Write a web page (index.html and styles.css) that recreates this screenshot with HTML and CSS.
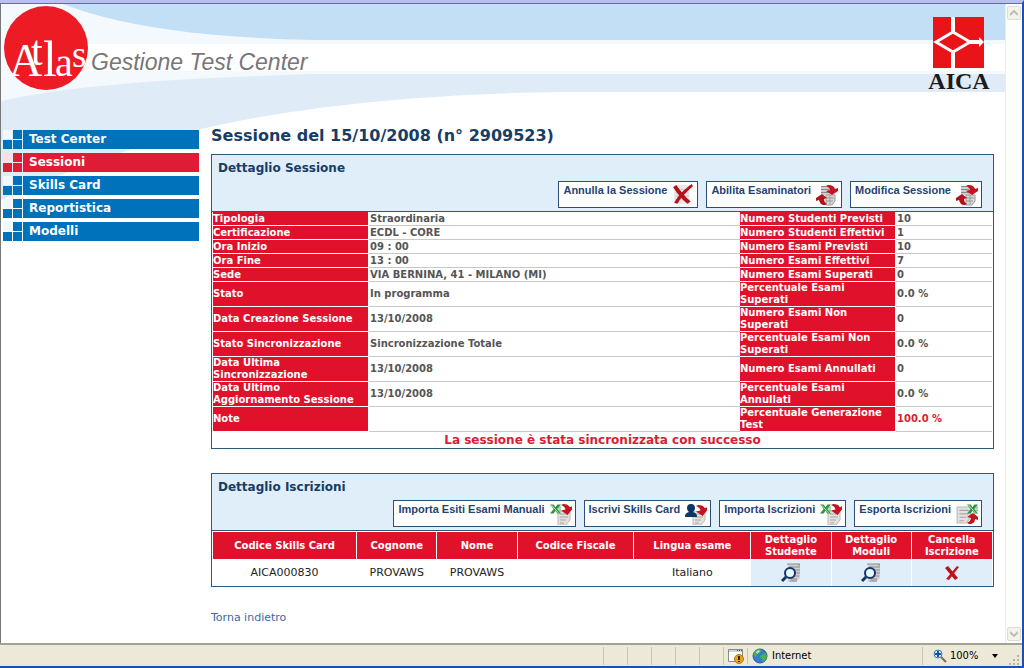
FILE: index.html
```html
<!DOCTYPE html>
<html lang="it">
<head>
<meta charset="utf-8">
<title>Atlas - Gestione Test Center</title>
<link rel="stylesheet" href="styles.css">
</head>
<body>
<svg class="defs" width="0" height="0" aria-hidden="true">
  <defs>
    <symbol id="sheet" viewBox="0 0 14 14">
      <path d="M1 0h12v9l-4 5H1z" fill="#e2e0e0" stroke="#bdbaba"/>
      <path d="M3 3h8M3 6h8M3 9h6M3 12h4" stroke="#aaa7a7" fill="none"/>
    </symbol>
    <symbol id="excel" viewBox="0 0 12 10">
      <path d="M0 0h4l2 3 2-3h4L8 5l4 5H8L6 7 4 10H0l4-5z" fill="#2f9440"/>
      <path d="M1.500 .5l8 9" stroke="#c5e6c6" fill="none"/>
      <path d="M9 3h3M9 5h3M9 7h3" stroke="#57a860" fill="none"/>
    </symbol>
    <symbol id="arrow-down" viewBox="0 0 10 10">
      <path d="M0 1l2-1c3 0 5 1 6 3l2-1v3L6 10 0 6l4-1C4 3 2 2 0 1z" fill="#c4141f"/>
    </symbol>
    <symbol id="ico-cancel" viewBox="0 0 20 20">
      <path d="M2 1h14v17H2z" fill="#e9e6e6"/>
      <path d="M3 5h12M3 8h12M3 11h12M3 14h12" stroke="#cfcaca"/>
      <path d="M1 3l3-2c4 6 8 11 13 15l-3 2C9 14 5 9 1 3z" fill="#b5121b"/>
      <path d="M18 0l1 2C13 7 8 12 5 18l-3-1C6 10 11 5 18 0z" fill="#b5121b"/>
    </symbol>
    <symbol id="ico-update" viewBox="0 0 22 22">
      <path d="M5 2h9v9H5z" fill="#d0cece"/>
      <path d="M5 2.500h7M5 5.500h8M5 8.500h9" stroke="#8a8888"/>
      <path d="M10 11h9v6l-3 4h-6z" fill="#dad8d8" stroke="#999"/>
      <path d="M10 14h8M10 17h7M14 11v9" stroke="#999" fill="none"/>
      <path d="M10 2l2-1c4 0 6 1 7 4l3-1v3l-6 4-6-4 4-1c0-2-2-3-4-4z" fill="#c4141f"/>
      <path d="M11 20l-2 1c-4 0-5-2-6-5l-3 1v-3l6-4 5 4-3 1c0 2 1 4 3 5z" fill="#b5121b"/>
    </symbol>
    <symbol id="ico-import" viewBox="0 0 22 22">
      <use href="#sheet" x="7" y="8" width="14" height="14"/>
      <use href="#excel" x="0" y="1" width="11" height="10"/>
      <use href="#arrow-down" x="11" y="1" width="11" height="11"/>
    </symbol>
    <symbol id="ico-export" viewBox="0 0 22 22">
      <use href="#sheet" x="0" y="3" width="16" height="18"/>
      <use href="#excel" x="11" y="1" width="11" height="10"/>
      <path d="M11 20l2 1c4 0 6-2 6-5l3 1v-3l-5-4-6 4 4 1c0 2-2 4-4 5z" fill="#c4141f"/>
    </symbol>
    <symbol id="ico-enroll" viewBox="0 0 22 22">
      <use href="#sheet" x="7" y="8" width="14" height="14"/>
      <path d="M6 1c3 0 4 2 4 4s-1 3-2 4c3 1 4 2 4 5H0c0-3 1-4 4-5-1-1-2-2-2-4s1-4 4-4z" fill="#0f3468"/>
      <use href="#arrow-down" x="11" y="2" width="11" height="11"/>
    </symbol>
    <symbol id="ico-detail" viewBox="0 0 20 20">
      <path d="M7 1h12v14l-4 4H7z" fill="#d2d0d0"/>
      <path d="M6 1h13M18 1v4M8 4h9M10 7h9M12 10h7M12 13h6M10 16h6M9 18h7" stroke="#8b8989" fill="none"/>
      <circle cx="9" cy="10" r="5" fill="#e9f8fd" stroke="#12356b" stroke-width="2"/>
      <path d="M5 14l-4 4" stroke="#12356b" stroke-width="3"/>
    </symbol>
    <symbol id="ico-delete" viewBox="0 0 14 14">
      <path d="M0 2l3-2 10 12-3 2z" fill="#b5121b"/>
      <path d="M12 0l2 1L4 14l-3-1z" fill="#c4141f"/>
    </symbol>
  </defs>
</svg>

<div class="viewport">
  <div class="page">
    <svg class="waves" width="620" height="210" viewBox="0 0 620 210" aria-hidden="true">
      <path d="M0 0H620V88H560C400 90 280 106 200 125C120 145 60 170 0 196z" fill="#dfecf8"/>
      <path d="M0 0H620V70H312C200 74 90 78 0 97z" fill="#f4f9fd"/>
      <path d="M86 40H620V67H86z" fill="#fff"/>
      <path d="M62 0H620V36H312C220 34 130 26 62 0z" fill="#c3dff5"/>
    </svg>
    <header class="banner">
      <svg class="atlas" width="340" height="88" viewBox="0 0 340 88" role="img" aria-label="Atlas Gestione Test Center">
        <circle cx="45" cy="44" r="42" fill="#ed1c24"/>
        <text class="atlas-letters"><tspan x="8" y="72" font-size="46">A</tspan><tspan x="30" y="61" font-size="42">t</tspan><tspan x="42" y="72" font-size="50">l</tspan><tspan x="54" y="72" font-size="40">a</tspan><tspan x="71" y="63" font-size="37">s</tspan></text>
        <text class="atlas-name" x="90" y="66">Gestione Test Center</text>
      </svg>
      <svg class="aica" width="62" height="76" viewBox="0 0 62 76" role="img" aria-label="AICA">
        <path d="M5 0h51v51H5z" fill="#e81418"/>
        <path d="M25 0v16M25 35v16M42 25h12" stroke="#fff" stroke-width="4"/>
        <path d="M8 25l17-10 17 10-17 10z" fill="#e81418" stroke="#fff" stroke-width="3"/>
        <path d="M51 20l5 5-5 5z" fill="#fff"/>
        <text class="aica-name" x="31" y="72" text-anchor="middle">AICA</text>
      </svg>
    </header>

    <div class="columns">
      <nav class="menu">
        <a class="item" href="#"><span class="tiles"><i></i><i></i><i></i><i></i></span><span class="label">Test Center</span></a>
        <a class="item current" href="#"><span class="tiles"><i></i><i></i><i></i><i></i></span><span class="label">Sessioni</span></a>
        <a class="item" href="#"><span class="tiles"><i></i><i></i><i></i><i></i></span><span class="label">Skills Card</span></a>
        <a class="item" href="#"><span class="tiles"><i></i><i></i><i></i><i></i></span><span class="label">Reportistica</span></a>
        <a class="item" href="#"><span class="tiles"><i></i><i></i><i></i><i></i></span><span class="label">Modelli</span></a>
      </nav>

      <main class="content">
        <h1>Sessione del 15/10/2008 (n° 2909523)</h1>

        <section class="panel">
          <div class="panel-head">
            <h2>Dettaglio Sessione</h2>
            <div class="actions">
              <button type="button">Annulla la Sessione<svg><use href="#ico-cancel"/></svg></button>
              <button type="button">Abilita Esaminatori<svg><use href="#ico-update"/></svg></button>
              <button type="button">Modifica Sessione<svg><use href="#ico-update"/></svg></button>
            </div>
          </div>
          <table class="details">
            <colgroup><col class="c-label"><col><col class="c-label"><col class="c-count"></colgroup>
            <tbody>
              <tr><th scope="row">Tipologia</th><td>Straordinaria</td><th scope="row">Numero Studenti Previsti</th><td>10</td></tr>
              <tr><th scope="row">Certificazione</th><td>ECDL - CORE</td><th scope="row">Numero Studenti Effettivi</th><td>1</td></tr>
              <tr><th scope="row">Ora Inizio</th><td>09 : 00</td><th scope="row">Numero Esami Previsti</th><td>10</td></tr>
              <tr><th scope="row">Ora Fine</th><td>13 : 00</td><th scope="row">Numero Esami Effettivi</th><td>7</td></tr>
              <tr><th scope="row">Sede</th><td>VIA BERNINA, 41 - MILANO (MI)</td><th scope="row">Numero Esami Superati</th><td>0</td></tr>
              <tr class="tall"><th scope="row">Stato</th><td>In programma</td><th scope="row">Percentuale Esami<br>Superati</th><td>0.0 %</td></tr>
              <tr class="tall"><th scope="row">Data Creazione Sessione</th><td>13/10/2008</td><th scope="row">Numero Esami Non<br>Superati</th><td>0</td></tr>
              <tr class="tall"><th scope="row">Stato Sincronizzazione</th><td>Sincronizzazione Totale</td><th scope="row">Percentuale Esami Non<br>Superati</th><td>0.0 %</td></tr>
              <tr class="tall"><th scope="row">Data Ultima<br>Sincronizzazione</th><td>13/10/2008</td><th scope="row">Numero Esami Annullati</th><td>0</td></tr>
              <tr class="tall"><th scope="row">Data Ultimo<br>Aggiornamento Sessione</th><td>13/10/2008</td><th scope="row">Percentuale Esami<br>Annullati</th><td>0.0 %</td></tr>
              <tr class="tall"><th scope="row">Note</th><td></td><th scope="row">Percentuale Generazione<br>Test</th><td class="full">100.0 %</td></tr>
            </tbody>
          </table>
          <p class="message">La sessione è stata sincronizzata con successo</p>
        </section>

        <section class="panel">
          <div class="panel-head">
            <h2>Dettaglio Iscrizioni</h2>
            <div class="actions">
              <button type="button">Importa Esiti Esami Manuali<svg><use href="#ico-import"/></svg></button>
              <button type="button">Iscrivi Skills Card<svg><use href="#ico-enroll"/></svg></button>
              <button type="button">Importa Iscrizioni<svg><use href="#ico-import"/></svg></button>
              <button type="button">Esporta Iscrizioni<svg><use href="#ico-export"/></svg></button>
            </div>
          </div>
          <table class="enrolments">
            <colgroup><col class="w-code"><col class="w-small"><col class="w-small"><col class="w-medium"><col class="w-medium"><col class="w-small"><col class="w-small"><col class="w-small"></colgroup>
            <thead>
              <tr><th>Codice Skills Card</th><th>Cognome</th><th>Nome</th><th>Codice Fiscale</th><th>Lingua esame</th><th>Dettaglio<br>Studente</th><th>Dettaglio<br>Moduli</th><th>Cancella<br>Iscrizione</th></tr>
            </thead>
            <tbody>
              <tr>
                <td>AICA000830</td><td>PROVAWS</td><td>PROVAWS</td><td></td><td>Italiano</td>
                <td class="op"><button type="button" aria-label="Dettaglio Studente"><svg><use href="#ico-detail"/></svg></button></td>
                <td class="op"><button type="button" aria-label="Dettaglio Moduli"><svg><use href="#ico-detail"/></svg></button></td>
                <td class="op"><button type="button" aria-label="Cancella Iscrizione"><svg class="small"><use href="#ico-delete"/></svg></button></td>
              </tr>
            </tbody>
          </table>
        </section>

        <a class="back" href="#">Torna indietro</a>
      </main>
    </div>
  </div>

  <div class="scrollbar">
    <button type="button" aria-label="Scorri su"><svg width="8" height="6" viewBox="0 0 8 6"><path d="M0 5l4-4 4 4" fill="none" stroke="#bdbdb2" stroke-width="2"/></svg></button>
    <button type="button" aria-label="Scorri giù"><svg width="8" height="6" viewBox="0 0 8 6"><path d="M0 1l4 4 4-4" fill="none" stroke="#bdbdb2" stroke-width="2"/></svg></button>
  </div>
</div>

<footer class="status">
  <span class="cell"></span><span class="cell"></span><span class="cell"></span><span class="cell"></span><span class="cell"></span>
  <span class="cell">
    <svg width="16" height="16" viewBox="0 0 16 16" aria-hidden="true">
      <path d="M.5 1.500h14v12H.5z" fill="#fff" stroke="#8a8a80"/>
      <path d="M1 2h13v2H1z" fill="#c9d4e6"/><path d="M9 2h1v1H9zM11 2h1v1h-1zM13 2h1v1h-1z" fill="#446"/>
      <circle cx="11" cy="11" r="4.500" fill="#e9a41e" stroke="#b47a10"/>
      <path d="M10 8h2v4h-2zM10 13h2v1h-2z" fill="#3a2500"/>
    </svg>
  </span>
  <span class="zone">
    <svg width="16" height="16" viewBox="0 0 16 16" aria-hidden="true">
      <circle cx="8" cy="8" r="7" fill="#2f7fd0" stroke="#2a5c9a"/>
      <path d="M3 3c2-2 5-2 7-1L8 5 5 6 4 9 2 8C1 6 2 4 3 3zM9 7l4-2 2 3c0 3-2 5-4 6l-1-3-2-2z" fill="#4fae4a"/>
      <path d="M4 4c1-1 3-2 4-1L5 6z" fill="#bfe3f5"/>
    </svg>
    Internet
  </span>
  <button class="zoom" type="button">
    <svg width="14" height="14" viewBox="0 0 14 14" aria-hidden="true">
      <path d="M8 8l5 5" stroke="#8a6a4a" stroke-width="2"/>
      <circle cx="5" cy="5" r="4" fill="#d9ecfb" stroke="#3a78c0"/>
      <path d="M5 2v6M2 5h6" stroke="#1c4fa0" stroke-width="2"/>
    </svg>
    100%
    <svg class="caret" width="6" height="4" viewBox="0 0 6 4" aria-hidden="true"><path d="M0 0h6L3 4z"/></svg>
  </button>
  <svg class="grip" width="12" height="12" viewBox="0 0 12 12" aria-hidden="true"><path d="M9 1h2v2H9zM9 5h2v2H9zM9 9h2v2H9zM5 5h2v2H5zM5 9h2v2H5zM1 9h2v2H1z" fill="#b8b4a0"/></svg>
</footer>
</body>
</html>
```

FILE: styles.css
```css
* { box-sizing: border-box; }

body {
  margin: 0;
  min-height: 100vh;
  display: flex;
  flex-direction: column;
  border-top: 3px solid #b9bff2;
  border-right: 2px solid #1c4fb4;
  border-bottom: 2px solid #1c4fb4;
  background: #fff;
  color: #222;
  font: 10px/12px Verdana, "DejaVu Sans", sans-serif;
}

button {
  font: inherit;
  color: inherit;
  cursor: pointer;
}

.defs { position: absolute; }

.viewport {
  flex: 1;
  display: flex;
  border-top: 1px solid #66785f;
  border-left: 1px solid #777;
}

.page {
  position: relative;
  flex: 1;
  min-width: 0;
  background: linear-gradient(#c3dff5 0 36px, #f4f9fd 36px 40px, #fff 40px 67px, #f4f9fd 67px 70px, #dfecf8 70px 88px, #fff 88px);
}

.waves {
  position: absolute;
  left: 0;
  top: 0;
}

.banner {
  position: relative;
  display: flex;
  justify-content: space-between;
  align-items: flex-start;
  height: 122px;
  padding-right: 15px;
}

.atlas-letters {
  fill: #fff;
  font-family: "Liberation Serif", serif;
}

.atlas-name {
  fill: #777;
  font: italic 23px "Liberation Sans", sans-serif;
}

.aica { margin-top: 13px; }

.aica-name {
  fill: #1b1b1b;
  font: bold 24px "Liberation Serif", serif;
}

.columns {
  position: relative;
  display: flex;
  gap: 12px;
  padding: 0 11px 0 2px;
}

/* Side menu */
.menu {
  flex: 0 0 196px;
  display: flex;
  flex-direction: column;
  gap: 4px;
  padding-top: 4px;
}

.item {
  --tone: #0072bc;
  --pale: #f1f8fd;
  display: flex;
  height: 19px;
  gap: 1px;
  color: #fff;
  font-size: 12px;
  font-weight: bold;
  line-height: 19px;
  text-decoration: none;
}

.item.current {
  --tone: #e01b36;
  --pale: #fbdde3;
}

.tiles {
  display: grid;
  grid-template: 9px 9px / 9px 9px;
  gap: 1px;
}

.tiles i { background: var(--tone); }
.tiles i:first-child { background: var(--pale); }

.label {
  flex: 1;
  padding-left: 6px;
  background: var(--tone);
}

/* Content */
.content {
  flex: 1;
  min-width: 0;
  padding-bottom: 16px;
}

h1, h2 {
  margin: 0;
  color: #163d66;
  font-weight: bold;
}

h1 {
  margin-bottom: 8px;
  font-size: 16px;
  line-height: 20px;
}

h2 {
  margin-bottom: 6px;
  font-size: 12px;
  line-height: 14px;
}

.panel {
  margin-bottom: 24px;
  border: 1px solid #2b5a7c;
}

.panel-head {
  padding: 6px 11px 3px 6px;
  border-bottom: 1px solid #2b5a7c;
  background: #e0eefa;
}

.actions {
  display: flex;
  justify-content: flex-end;
  gap: 8px;
}

.actions button {
  display: flex;
  gap: 5px;
  height: 27px;
  padding: 2px 3px 0 4px;
  border: 1px solid #2b5078;
  background: #fff;
  color: #1f4470;
  font: bold 11px/12px "Liberation Sans", Arial, sans-serif;
}

.actions svg {
  width: 22px;
  height: 22px;
}

table {
  width: 100%;
  border-collapse: separate;
  border-spacing: 0;
  table-layout: fixed;
}

th {
  border: 0 solid #fff;
  background: #df112b;
  color: #fff;
}

.details { padding: 0 1px; }
.details .c-label { width: 156px; }
.details .c-count { width: 96px; }
.details tr { height: 14px; }
.details .tall { height: 25px; }

.details th {
  padding: 0;
  border-width: 0 1px 1px 0;
  text-align: left;
}

.details td {
  padding: 0 1px;
  border-bottom: 1px solid #c8c8c8;
  color: #555;
  font-weight: bold;
}

.details td.full { color: #d81e34; }

.message {
  margin: 0;
  color: #d81e34;
  font-size: 12px;
  font-weight: bold;
  line-height: 16px;
  text-align: center;
}

.enrolments { padding: 1px 1px 0; }
.w-code { width: 18.5%; }
.w-medium { width: 15%; }

.enrolments th {
  height: 27px;
  padding: 0;
  border-right-width: 1px;
}

.enrolments td {
  height: 27px;
  padding: 0;
  border-right: 1px solid #fff;
  font-size: 11px;
  text-align: center;
}

.enrolments th:last-child,
.enrolments td:last-child { border-right: 0; }

.enrolments .op { background: #e0eefa; }

.op button {
  display: block;
  margin: 0 auto;
  padding: 0;
  border: 0;
  background: none;
}

.op svg {
  display: block;
  width: 20px;
  height: 20px;
}

.op .small {
  width: 14px;
  height: 14px;
}

.back {
  color: #3a68a8;
  font-size: 11px;
  line-height: 14px;
  text-decoration: none;
}

/* Window chrome */
.scrollbar {
  flex: 0 0 17px;
  display: flex;
  flex-direction: column;
  justify-content: space-between;
  align-items: center;
  padding: 2px 0;
  border-left: 1px solid #eeede5;
  background: #fefefb;
}

.scrollbar button {
  display: grid;
  place-items: center;
  width: 14px;
  height: 14px;
  padding: 0;
  border: 1px solid #dcdcd0;
  border-radius: 2px;
  background: #f3f3ec;
}

.status {
  display: flex;
  align-items: center;
  justify-content: flex-end;
  height: 23px;
  padding-right: 2px;
  border-top: 2px solid #a5a294;
  background: #ece9d8;
  color: #000;
  font: 11px/16px Tahoma, "DejaVu Sans Condensed", "DejaVu Sans", sans-serif;
}

.cell {
  display: grid;
  place-items: center;
  width: 24px;
  height: 18px;
  border-left: 1px solid #c9c5b2;
}

.zone {
  display: flex;
  gap: 4px;
  width: 175px;
  padding-left: 4px;
  border-left: 1px solid #c9c5b2;
}

.zoom {
  display: flex;
  align-items: center;
  gap: 3px;
  width: 80px;
  height: 18px;
  padding: 0 4px 0 10px;
  border: 0;
  border-left: 1px solid #c9c5b2;
  background: none;
}

.caret { margin-left: auto; }

.grip {
  align-self: flex-end;
  margin-left: 6px;
}
```
